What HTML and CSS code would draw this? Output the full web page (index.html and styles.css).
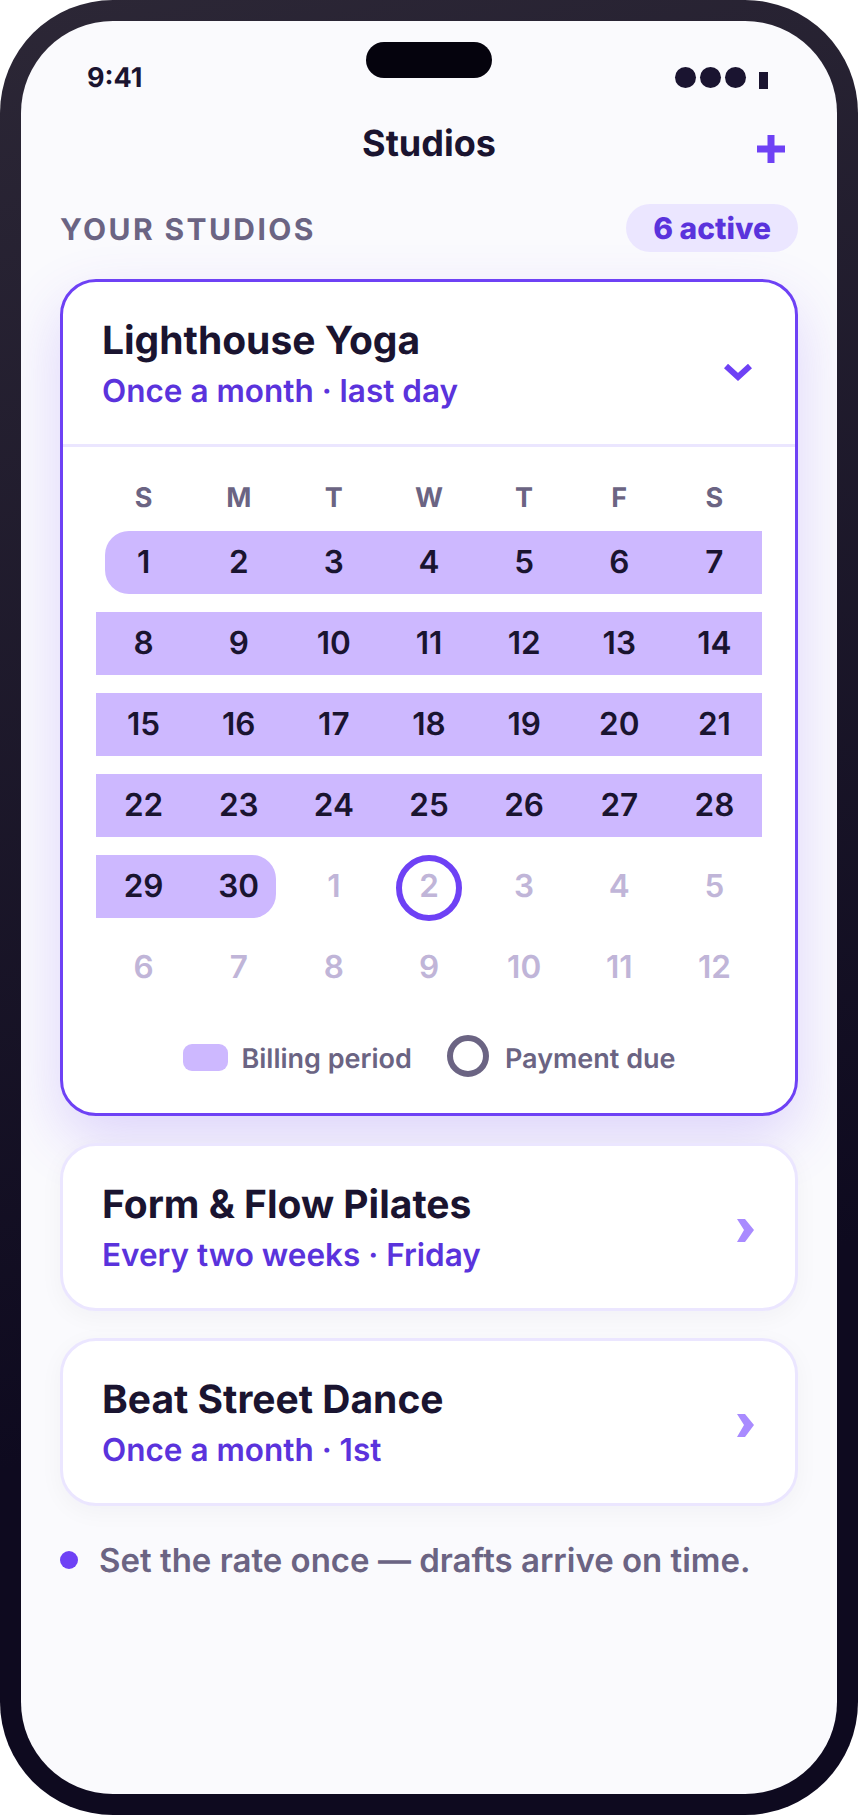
FILE: index.html
```html
<!DOCTYPE html>
<html lang="en">

<head>
  <meta charset="UTF-8">
  <meta name="viewport" content="width=device-width, initial-scale=1.0">
  <title>Studios</title>
  <link rel="stylesheet" href="styles.css">
</head>

<body>
  <div class="c-phone">
    <div class="c-phone__screen">
      <div class="c-phone__island"></div>

      <div class="c-status">
        <span class="c-status__time">9:41</span>
        <div class="c-status__icons">
          <i class="c-status__dot"></i>
          <i class="c-status__dot"></i>
          <i class="c-status__dot"></i>
          <i class="c-status__bar"></i>
        </div>
      </div>

      <header class="c-nav">
        <h1 class="c-nav__title">Studios</h1>
        <svg class="c-nav__add" width="28" height="28" viewBox="0 0 28 28">
          <path d="M14 0V28M0 14H28" fill="none" stroke="#6e41f5" stroke-width="7" />
        </svg>
      </header>

      <div class="c-section">
        <span class="c-section__label">YOUR STUDIOS</span>
        <span class="c-section__pill">6 active</span>
      </div>

      <section class="c-card c-card--open">
        <div class="c-card__head">
          <div>
            <h2 class="c-card__title">Lighthouse Yoga</h2>
            <p class="c-card__sub">Once a month · last day</p>
          </div>
          <svg class="c-card__down" width="28" height="18" viewBox="0 0 28 18">
            <path d="M2 2L14 13L26 2" fill="none" stroke="#6e41f5" stroke-width="6" />
          </svg>
        </div>

        <div class="c-cal">
          <div class="c-cal__grid">
            <div class="c-cal__week">S</div>
            <div class="c-cal__week">M</div>
            <div class="c-cal__week">T</div>
            <div class="c-cal__week">W</div>
            <div class="c-cal__week">T</div>
            <div class="c-cal__week">F</div>
            <div class="c-cal__week">S</div>

            <div class="c-cal__day is-billing is-first">1</div>
            <div class="c-cal__day is-billing">2</div>
            <div class="c-cal__day is-billing">3</div>
            <div class="c-cal__day is-billing">4</div>
            <div class="c-cal__day is-billing">5</div>
            <div class="c-cal__day is-billing">6</div>
            <div class="c-cal__day is-billing">7</div>

            <div class="c-cal__day is-billing">8</div>
            <div class="c-cal__day is-billing">9</div>
            <div class="c-cal__day is-billing">10</div>
            <div class="c-cal__day is-billing">11</div>
            <div class="c-cal__day is-billing">12</div>
            <div class="c-cal__day is-billing">13</div>
            <div class="c-cal__day is-billing">14</div>

            <div class="c-cal__day is-billing">15</div>
            <div class="c-cal__day is-billing">16</div>
            <div class="c-cal__day is-billing">17</div>
            <div class="c-cal__day is-billing">18</div>
            <div class="c-cal__day is-billing">19</div>
            <div class="c-cal__day is-billing">20</div>
            <div class="c-cal__day is-billing">21</div>

            <div class="c-cal__day is-billing">22</div>
            <div class="c-cal__day is-billing">23</div>
            <div class="c-cal__day is-billing">24</div>
            <div class="c-cal__day is-billing">25</div>
            <div class="c-cal__day is-billing">26</div>
            <div class="c-cal__day is-billing">27</div>
            <div class="c-cal__day is-billing">28</div>

            <div class="c-cal__day is-billing">29</div>
            <div class="c-cal__day is-billing is-last">30</div>
            <div class="c-cal__day">1</div>
            <div class="c-cal__day is-due">2</div>
            <div class="c-cal__day">3</div>
            <div class="c-cal__day">4</div>
            <div class="c-cal__day">5</div>

            <div class="c-cal__day">6</div>
            <div class="c-cal__day">7</div>
            <div class="c-cal__day">8</div>
            <div class="c-cal__day">9</div>
            <div class="c-cal__day">10</div>
            <div class="c-cal__day">11</div>
            <div class="c-cal__day">12</div>
          </div>

          <div class="c-legend">
            <i class="c-legend__swatch"></i>
            <span class="c-legend__text">Billing period</span>
            <i class="c-legend__ring"></i>
            <span class="c-legend__text">Payment due</span>
          </div>
        </div>
      </section>

      <section class="c-card">
        <div class="c-card__head">
          <div>
            <h2 class="c-card__title">Form &amp; Flow Pilates</h2>
            <p class="c-card__sub">Every two weeks · Friday</p>
          </div>
          <svg class="c-card__next" width="17" height="23" viewBox="0 0 17 23">
            <polygon points="0,0 8,0 17,11 8,23 0,23 7,11" fill="#a98bff" />
          </svg>
        </div>
      </section>

      <section class="c-card">
        <div class="c-card__head">
          <div>
            <h2 class="c-card__title">Beat Street Dance</h2>
            <p class="c-card__sub">Once a month · 1st</p>
          </div>
          <svg class="c-card__next" width="17" height="23" viewBox="0 0 17 23">
            <polygon points="0,0 8,0 17,11 8,23 0,23 7,11" fill="#a98bff" />
          </svg>
        </div>
      </section>

      <p class="c-note">Set the rate once — drafts arrive on time.</p>
    </div>
  </div>
</body>

</html>
```

FILE: styles.css
```css
*,
*::before,
*::after {
  margin: 0;
  box-sizing: border-box;
}

body {
  background: #fff;
  font-family: "Inter", "Liberation Sans", sans-serif;
  color: #1a1430;
  text-rendering: geometricPrecision;
}

.c-phone {
  width: 858px;
  height: 1815px;
  padding: 21px;
  border-radius: 113px;
  background: linear-gradient(165deg, #2c2736 0%, #0e0a1f 72%);
}

.c-phone__screen {
  position: relative;
  height: 100%;
  padding: 0 39px;
  border-radius: 92px;
  background: #fafafd;
  overflow: hidden;
}

.c-phone__island {
  position: absolute;
  top: 21px;
  left: 345px;
  width: 126px;
  height: 36px;
  border-radius: 18px;
  background: #05030d;
}

/* STATUS */
.c-status {
  display: flex;
  justify-content: space-between;
  align-items: center;
  height: 54px;
  margin-top: 29px;
  padding: 0 30px 0 27px;
}

.c-status__time {
  font-size: 27px;
  font-weight: 700;
}

.c-status__icons {
  display: flex;
  align-items: flex-end;
  gap: 4px;
}

.c-status__dot {
  width: 21px;
  height: 21px;
  border-radius: 50%;
  background: #1a1430;
}

.c-status__bar {
  width: 9px;
  height: 17px;
  margin-left: 9px;
  margin-bottom: -1px;
  background: #1a1430;
}

/* NAV */
.c-nav {
  position: relative;
  display: flex;
  justify-content: center;
  align-items: center;
  height: 60px;
  margin-top: 9px;
}

.c-nav__title {
  font-size: 36px;
  font-weight: 700;
  line-height: 1;
}

.c-nav__add {
  position: absolute;
  right: 13px;
  top: 22px;
}

/* SECTION */
.c-section {
  display: flex;
  justify-content: space-between;
  align-items: center;
  margin-top: 31px;
}

.c-section__label {
  padding-top: 3px;
  font-size: 30px;
  font-weight: 700;
  letter-spacing: 2.4px;
  color: #6b6483;
}

.c-section__pill {
  height: 48px;
  padding: 1px 27px 0;
  border-radius: 24px;
  background: #ebe6ff;
  color: #5a33dc;
  font-size: 30px;
  font-weight: 800;
  line-height: 48px;
}

/* CARD */
.c-card {
  margin-top: 27px;
  border: 3px solid #ebe6ff;
  border-radius: 36px;
  background: #fff;
  box-shadow: 0 6px 24px rgba(26, 20, 48, .04);
}

.c-card--open {
  border-color: #6e41f5;
  box-shadow: 0 24px 60px rgba(110, 65, 245, .2);
}

.c-card__head {
  display: flex;
  justify-content: space-between;
  align-items: center;
  height: 162px;
  padding: 0 41px 0 39px;
}

.c-card--open .c-card__head {
  border-bottom: 3px solid #ebe6ff;
  height: 165px;
}

.c-card__title {
  font-size: 39px;
  font-weight: 700;
  line-height: 47px;
}

.c-card__sub {
  margin-top: 9px;
  font-size: 31.5px;
  font-weight: 600;
  line-height: 36px;
  color: #5a33dc;
}

.c-card__down {
  margin: 19px 2px 0 0;
}

.c-card__next {
  margin-top: 6px;
}

/* CALENDAR */
.c-cal {
  padding: 33px 33px 36px;
}

.c-cal__grid {
  display: grid;
  grid-template-columns: repeat(7, 1fr);
  grid-template-rows: 33px repeat(6, 63px);
  row-gap: 18px;
}

.c-cal__week {
  display: flex;
  justify-content: center;
  align-items: center;
  padding-top: 2px;
  font-size: 27px;
  font-weight: 700;
  color: #6b6483;
}

.c-cal__day {
  position: relative;
  display: flex;
  justify-content: center;
  align-items: center;
  padding-bottom: 2px;
  font-size: 31.5px;
  font-weight: 600;
  color: #c0b5d8;
}

.c-cal__day.is-billing {
  background: #cdb8ff;
  color: #1a1430;
}

.c-cal__day.is-first {
  margin-left: 9px;
  padding-right: 9px;
  border-radius: 24px 0 0 24px;
}

.c-cal__day.is-last {
  margin-right: 10px;
  padding-left: 10px;
  border-radius: 0 24px 24px 0;
}

.c-cal__day.is-due::before {
  content: '';
  position: absolute;
  top: 0;
  left: 50%;
  width: 66px;
  height: 66px;
  margin-left: -33px;
  border: 6px solid #6e41f5;
  border-radius: 50%;
}

.c-legend {
  display: flex;
  justify-content: center;
  align-items: center;
  height: 42px;
  margin-top: 36px;
}

.c-legend__swatch {
  width: 45px;
  height: 27px;
  margin: 3px 13px 0 1px;
  border-radius: 9px;
  background: #cdb8ff;
}

.c-legend__ring {
  width: 42px;
  height: 42px;
  margin: 0 16px 0 35px;
  border: 6px solid #6b6483;
  border-radius: 50%;
}

.c-legend__text {
  margin-top: 4px;
  font-size: 27px;
  font-weight: 600;
  color: #6b6483;
}

/* NOTE */
.c-note {
  display: flex;
  align-items: center;
  gap: 21px;
  margin-top: 34px;
  font-size: 33px;
  font-weight: 600;
  color: #6b6483;
}

.c-note::before {
  content: '';
  flex: none;
  width: 18px;
  height: 18px;
  border-radius: 50%;
  background: #6e41f5;
}
```
